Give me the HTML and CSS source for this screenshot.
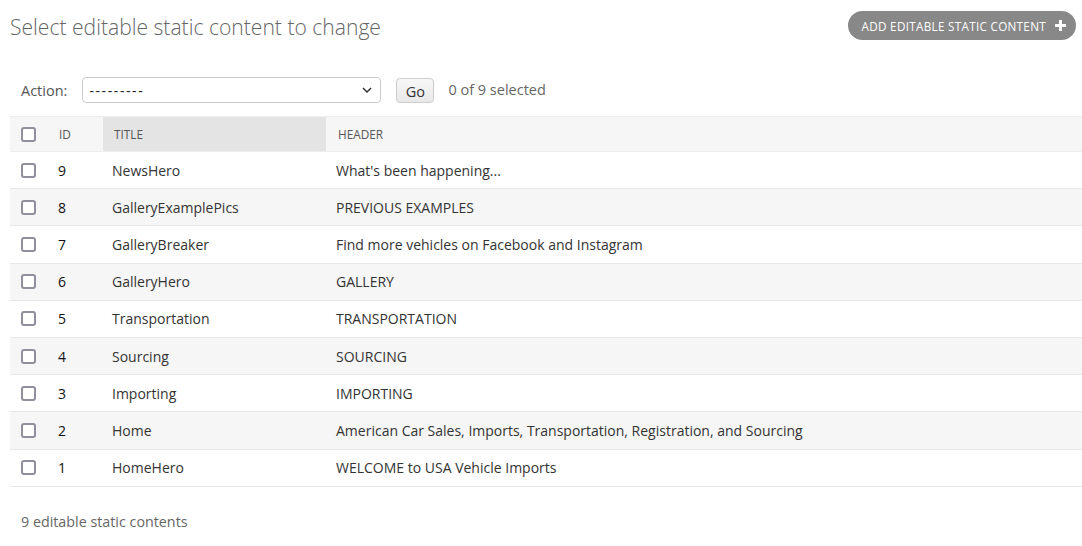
FILE: index.html
```html
<!DOCTYPE html>
<html lang="en">
<head>
<meta charset="utf-8">
<title>Select editable static content to change</title>
<link rel="stylesheet" href="styles.css">
</head>
<body>
<div class="content">
  <div class="page-head">
    <h1 class="page-title">Select editable static content to change</h1>
    <a class="add-btn" href="#">ADD EDITABLE STATIC CONTENT
      <svg class="plus" width="11" height="11" viewBox="0 0 11 11"><path d="M4 0h3v4h4v3H7v4H4V7H0V4h4z" fill="#fff"/></svg>
    </a>
  </div>

  <div class="actions">
    <label class="action-label">Action:</label>
    <div class="select">
      <span class="select-value">---------</span>
      <svg class="chev" width="10" height="6" viewBox="0 0 10 6"><path d="M1 1l4 4 4-4" fill="none" stroke="#333" stroke-width="1.5"/></svg>
    </div>
    <button class="go">Go</button>
    <span class="counter">0 of 9 selected</span>
  </div>

  <table class="result-list">
    <colgroup>
      <col class="c-check"><col class="c-id"><col class="c-title"><col>
    </colgroup>
    <thead>
      <tr>
        <th class="th-check"><input type="checkbox"></th>
        <th>ID</th>
        <th class="sorted">TITLE</th>
        <th>HEADER</th>
      </tr>
    </thead>
    <tbody>
      <tr><td class="td-check"><input type="checkbox"></td><td class="id">9</td><td>NewsHero</td><td>What's been happening...</td></tr>
      <tr class="alt"><td class="td-check"><input type="checkbox"></td><td class="id">8</td><td>GalleryExamplePics</td><td>PREVIOUS EXAMPLES</td></tr>
      <tr><td class="td-check"><input type="checkbox"></td><td class="id">7</td><td>GalleryBreaker</td><td>Find more vehicles on Facebook and Instagram</td></tr>
      <tr class="alt"><td class="td-check"><input type="checkbox"></td><td class="id">6</td><td>GalleryHero</td><td>GALLERY</td></tr>
      <tr><td class="td-check"><input type="checkbox"></td><td class="id">5</td><td>Transportation</td><td>TRANSPORTATION</td></tr>
      <tr class="alt"><td class="td-check"><input type="checkbox"></td><td class="id">4</td><td>Sourcing</td><td>SOURCING</td></tr>
      <tr><td class="td-check"><input type="checkbox"></td><td class="id">3</td><td>Importing</td><td>IMPORTING</td></tr>
      <tr class="alt"><td class="td-check"><input type="checkbox"></td><td class="id">2</td><td>Home</td><td>American Car Sales, Imports, Transportation, Registration, and Sourcing</td></tr>
      <tr><td class="td-check"><input type="checkbox"></td><td class="id">1</td><td>HomeHero</td><td>WELCOME to USA Vehicle Imports</td></tr>
    </tbody>
  </table>

  <p class="paginator">9 editable static contents</p>
</div>
</body>
</html>
```

FILE: styles.css
```css
* { box-sizing: border-box; }
html, body { margin: 0; padding: 0; background: #fff; }
body {
  font-family: "Open Sans", "Noto Sans", sans-serif;
  color: #333;
  font-size: 14px;
}
.content { padding: 0 0 0 10px; }

.page-head {
  display: flex;
  justify-content: space-between;
  align-items: flex-start;
  padding: 11px 6px 0 0;
  height: 70px;
}
.page-title {
  margin: 2px 0 0 0;
  font-size: 21.1px;
  font-weight: 300;
  color: #666;
  line-height: 28px;
}
.add-btn {
  display: flex;
  align-items: center;
  gap: 9px;
  height: 29px;
  padding: 0 10px 0 14px;
  border-radius: 15px;
  background: #888;
  color: #fff;
  text-decoration: none;
  font-size: 11.7px;
  letter-spacing: 0.3px;
}
.plus { display: block; }

.actions {
  display: flex;
  align-items: center;
  height: 40px;
  margin-bottom: 6px;
  padding: 0 0 0 11px;
}
.action-label { color: #555; font-size: 14.5px; margin-right: 15px; }
.select {
  width: 299px;
  height: 26px;
  border: 1px solid #ccc;
  border-radius: 4px;
  display: flex;
  align-items: center;
  justify-content: space-between;
  padding: 0 8px 0 6px;
  font-size: 14px;
  color: #222;
}
.select-value { letter-spacing: 1.6px; }
.chev { display: block; }
.go {
  margin-left: 15px;
  width: 38px;
  height: 25px;
  border: 1px solid #ccc;
  border-radius: 4px;
  background: linear-gradient(#f8f8f8, #e8e8e8);
  font-family: inherit;
  font-size: 14.5px;
  color: #333;
  padding: 2px 0 0;
}
.counter { margin-left: 14px; color: #666; font-size: 14.5px; margin-top: -2px; }

.result-list {
  width: 100%;
  border-collapse: collapse;
  table-layout: fixed;
}
.c-check { width: 37px; }
.c-id { width: 56px; }
.c-title { width: 223px; }

.result-list thead th {
  background: #f6f6f6;
  border-top: 1px solid #eee;
  border-bottom: 1px solid #eee;
  height: 35px;
  font-size: 11.8px;
  font-weight: 400;
  color: #555;
  text-align: left;
  padding: 0 0 0 11px;
  vertical-align: middle;
}
.result-list thead th.sorted { background: #e4e4e4; }
.result-list thead th:nth-child(2) { padding-left: 12px; }
.result-list thead th:nth-child(4) { padding-left: 12px; }
.result-list input[type="checkbox"] {
  -webkit-appearance: none;
  appearance: none;
  margin: 0;
  width: 15px;
  height: 15px;
  display: block;
  border: 2px solid #8f8f9d;
  border-radius: 3px;
  background: #fff;
}
.result-list tbody td {
  height: 37.2px;
  border-bottom: 1px solid #e8e8e8;
  padding: 0 0 0 10px;
  vertical-align: middle;
  font-size: 14px;
  color: #333;
}
.result-list tbody td.td-check { padding-left: 11px; }
.result-list tbody td.id { color: #111; font-weight: 500; padding-left: 11px; }
.result-list tbody td:nth-child(3) { padding-left: 9px; }
.result-list tbody tr.alt td { background: #f6f6f6; }

.paginator {
  margin: 25px 0 0 11px;
  color: #666;
  font-size: 14.3px;
}
```
